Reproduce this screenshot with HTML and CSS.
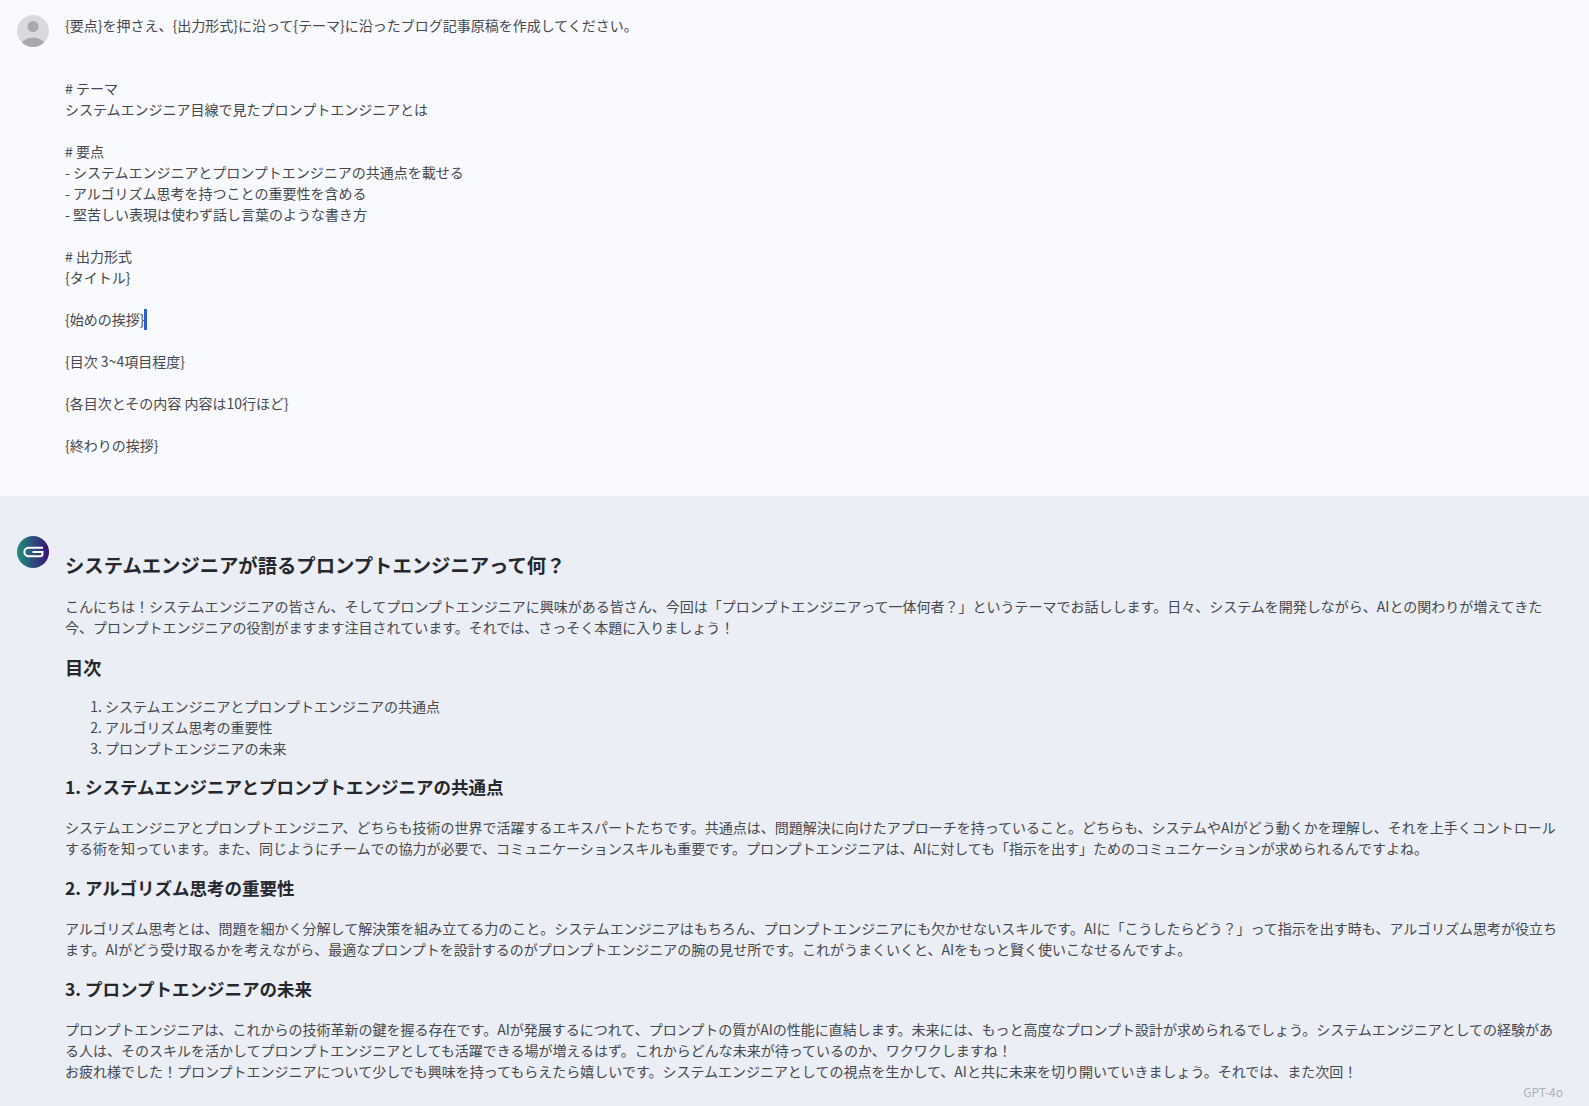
FILE: index.html
```
<!DOCTYPE html>
<html lang="ja">
<head>
<meta charset="utf-8">
<title>Chat</title>
<link rel="stylesheet" href="styles.css">
</head>
<body>
<section class="msg msg-user">
  <svg class="avatar" viewBox="0 0 32 32" aria-hidden="true">
    <defs><clipPath id="ac"><circle cx="16" cy="16" r="16"/></clipPath></defs>
    <circle cx="16" cy="16" r="16" fill="#d9dade"/>
    <g clip-path="url(#ac)" fill="#a9a9ad">
      <circle cx="16" cy="11.5" r="5.5"/>
      <ellipse cx="16" cy="32" rx="12.5" ry="9.5"/>
    </g>
  </svg>
  <div class="user-text">{要点}を押さえ、{出力形式}に沿って{テーマ}に沿ったブログ記事原稿を作成してください。


# テーマ
システムエンジニア目線で見たプロンプトエンジニアとは

# 要点
- システムエンジニアとプロンプトエンジニアの共通点を載せる
- アルゴリズム思考を持つことの重要性を含める
- 堅苦しい表現は使わず話し言葉のような書き方

# 出力形式
{タイトル}

{始めの挨拶}<span class="caret"></span>

{目次 3~4項目程度}

{各目次とその内容 内容は10行ほど}

{終わりの挨拶}</div>
</section>
<section class="msg msg-bot">
  <svg class="avatar" viewBox="0 0 32 32" aria-hidden="true">
    <defs><linearGradient id="bg" x1="0" y1="0" x2="1" y2="0"><stop offset="0" stop-color="#1f8f7c"/><stop offset="1" stop-color="#3a1278"/></linearGradient></defs>
    <circle cx="16" cy="16" r="16" fill="url(#bg)"/>
    <path d="M26 11.8H11.6a4.2 4.2 0 0 0 0 8.4H23.2a2.2 2.2 0 0 0 2.2-2.2V16H15.5" fill="none" stroke="#fff" stroke-width="2.1"/>
  </svg>
  <div class="bot-text">
    <h1>システムエンジニアが語るプロンプトエンジニアって何？</h1>
    <p>こんにちは！システムエンジニアの皆さん、そしてプロンプトエンジニアに興味がある皆さん、今回は「プロンプトエンジニアって一体何者？」というテーマでお話しします。日々、システムを開発しながら、AIとの関わりが増えてきた今、プロンプトエンジニアの役割がますます注目されています。それでは、さっそく本題に入りましょう！</p>
    <h2>目次</h2>
    <ol>
      <li>システムエンジニアとプロンプトエンジニアの共通点</li>
      <li>アルゴリズム思考の重要性</li>
      <li>プロンプトエンジニアの未来</li>
    </ol>
    <h3>1. システムエンジニアとプロンプトエンジニアの共通点</h3>
    <p>システムエンジニアとプロンプトエンジニア、どちらも技術の世界で活躍するエキスパートたちです。共通点は、問題解決に向けたアプローチを持っていること。どちらも、システムやAIがどう動くかを理解し、それを上手くコントロールする術を知っています。また、同じようにチームでの協力が必要で、コミュニケーションスキルも重要です。プロンプトエンジニアは、AIに対しても「指示を出す」ためのコミュニケーションが求められるんですよね。</p>
    <h3>2. アルゴリズム思考の重要性</h3>
    <p>アルゴリズム思考とは、問題を細かく分解して解決策を組み立てる力のこと。システムエンジニアはもちろん、プロンプトエンジニアにも欠かせないスキルです。AIに「こうしたらどう？」って指示を出す時も、アルゴリズム思考が役立ちます。AIがどう受け取るかを考えながら、最適なプロンプトを設計するのがプロンプトエンジニアの腕の見せ所です。これがうまくいくと、AIをもっと賢く使いこなせるんですよ。</p>
    <h3>3. プロンプトエンジニアの未来</h3>
    <p>プロンプトエンジニアは、これからの技術革新の鍵を握る存在です。AIが発展するにつれて、プロンプトの質がAIの性能に直結します。未来には、もっと高度なプロンプト設計が求められるでしょう。システムエンジニアとしての経験がある人は、そのスキルを活かしてプロンプトエンジニアとしても活躍できる場が増えるはず。これからどんな未来が待っているのか、ワクワクしますね！<br>お疲れ様でした！プロンプトエンジニアについて少しでも興味を持ってもらえたら嬉しいです。システムエンジニアとしての視点を生かして、AIと共に未来を切り開いていきましょう。それでは、また次回！</p>
  </div>
  <span class="model">GPT-4o</span>
</section>
</body>
</html>
```

FILE: styles.css
```
html, body {
  margin: 0;
  padding: 0;
}
body {
  width: 1589px;
  height: 1106px;
  overflow: hidden;
  font-family: "Noto Sans CJK JP", "Noto Sans", sans-serif;
  font-size: 14px;
  line-height: 21px;
  color: #46484e;
  background: #ebeef5;
}
.msg {
  display: flex;
  align-items: flex-start;
  gap: 16px;
  padding-left: 17px;
  padding-right: 28px;
}
.avatar {
  flex: none;
  width: 32px;
  height: 32px;
}
.msg-user {
  height: 481px;
  padding-top: 15px;
  background: #f9fafe;
}
.user-text {
  white-space: pre-wrap;
}
.caret {
  display: inline-block;
  width: 3px;
  height: 21px;
  vertical-align: top;
  background: #2f5fc8;
}
.msg-bot {
  position: relative;
  height: 570px;
  padding-top: 40px;
}
.bot-text {
  flex: 1;
  min-width: 0;
}
h1, h2, h3 {
  margin: 0;
  font-weight: 700;
  color: #26282e;
}
h1 {
  margin-top: 15px;
  font-size: 19.33px;
  line-height: 28px;
}
h2 {
  margin-top: 16px;
  font-size: 18.2px;
  line-height: 26px;
}
h3 {
  margin-top: 15px;
  font-size: 17.5px;
  line-height: 26px;
}
p {
  margin: 17px 0 0;
}
ol {
  margin: 16px 0 0;
  padding-left: 40px;
}
p + h3 {
  margin-top: 16px;
}
.model {
  position: absolute;
  right: 26px;
  bottom: 4px;
  font-size: 12px;
  color: #aeb1b8;
}
```
